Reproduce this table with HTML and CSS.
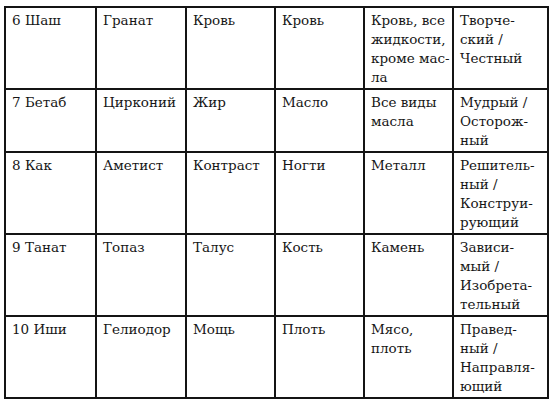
FILE: index.html
```html
<!DOCTYPE html>
<html lang="ru">
<head>
<meta charset="utf-8">
<link rel="stylesheet" href="styles.css">
</head>
<body>
<table class="grid">
  <colgroup>
    <col class="c1"><col class="c2"><col class="c3"><col class="c4"><col class="c5"><col class="c6">
  </colgroup>
  <tbody>
    <tr class="r4">
      <td>6 Шаш</td><td>Гранат</td><td>Кровь</td><td>Кровь</td>
      <td>Кровь, все<br>жидкости,<br>кроме мас-<br>ла</td>
      <td>Творче-<br>ский /<br>Честный</td>
    </tr>
    <tr class="r3">
      <td>7 Бетаб</td><td>Цирконий</td><td>Жир</td><td>Масло</td>
      <td>Все виды<br>масла</td>
      <td>Мудрый /<br>Осторож-<br>ный</td>
    </tr>
    <tr class="r4">
      <td>8 Как</td><td>Аметист</td><td>Контраст</td><td>Ногти</td>
      <td>Металл</td>
      <td>Решитель-<br>ный /<br>Конструи-<br>рующий</td>
    </tr>
    <tr class="r4">
      <td>9 Танат</td><td>Топаз</td><td>Талус</td><td>Кость</td>
      <td>Камень</td>
      <td>Зависи-<br>мый /<br>Изобрета-<br>тельный</td>
    </tr>
    <tr class="r4">
      <td>10 Иши</td><td>Гелиодор</td><td>Мощь</td><td>Плоть</td>
      <td>Мясо,<br>плоть</td>
      <td>Правед-<br>ный /<br>Направля-<br>ющий</td>
    </tr>
  </tbody>
</table>
</body>
</html>
```
FILE: styles.css
```css
html, body {
  margin: 0;
  padding: 0;
  background: #ffffff;
}
body {
  padding: 6px 0 0 4px;
  font-family: "DejaVu Serif", serif;
  font-size: 13.5px;
  color: #161616;
}
.grid {
  border-collapse: collapse;
  table-layout: fixed;
  width: 543px;
}
.grid td {
  border: 2px solid #141414;
  vertical-align: top;
  text-align: left;
  padding: 3px 2px 1px 6px;
  line-height: 19px;
  white-space: nowrap;
}
.c1 { width: 91px; }
.c2 { width: 90px; }
.c3 { width: 89px; }
.c4 { width: 89px; }
.c5 { width: 89px; }
.c6 { width: 95px; }
.r4 td { height: 76px; }
.r3 td { height: 57px; }
```
